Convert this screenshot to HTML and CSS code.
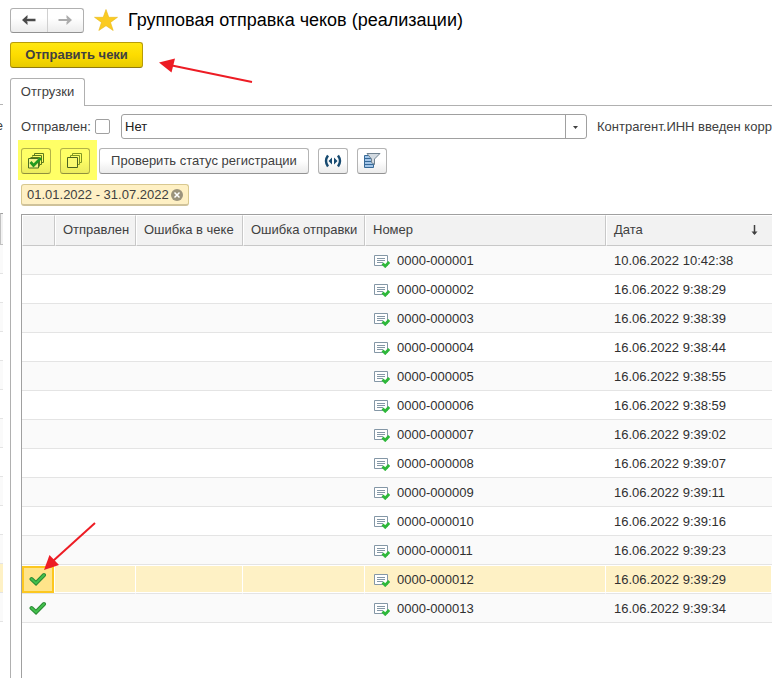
FILE: index.html
```html
<!DOCTYPE html>
<html lang="ru">
<head>
<meta charset="utf-8">
<title>Групповая отправка чеков (реализации)</title>
<link rel="stylesheet" href="styles.css">
</head>
<body>
<svg class="defs" width="0" height="0" aria-hidden="true">
  <symbol id="doc" viewBox="0 0 16 14">
    <path d="M.5 1.5h13v10H.5z" fill="#fff" stroke="#8497a6"/>
    <path d="M3 4.500h8M3 6.500h8M3 8.500h6" stroke="#8497a6" fill="none"/>
    <path d="M8.500 9.500l2.700 2.700 4-4.200" fill="none" stroke="#2eb83a" stroke-width="2.800"/>
  </symbol>
  <symbol id="tick" viewBox="0 0 18 14">
    <path d="M2.500 7l4.500 4.200L15 3" fill="none" stroke="#2b8a34" stroke-width="4" stroke-linecap="round"/>
    <path d="M2.500 7l4.500 4.200L15 3" fill="none" stroke="#42c04c" stroke-width="2" stroke-linecap="round"/>
  </symbol>
</svg>
<div class="app">
  <aside class="behind" aria-hidden="true">
    <div class="behind-top"></div>
    <div class="behind-text">е</div>
    <div class="behind-head"></div>
    <div class="behind-rows"><i></i><i></i><i></i><i></i><i></i><i></i><i></i><i></i><i></i><i></i><i></i><i class="sel"></i><i></i></div>
  </aside>
  <main class="form">
    <header class="title-row">
      <div class="nav">
        <button type="button" aria-label="Назад"><svg width="14" height="10" viewBox="0 0 14 10"><path d="M13.500 5H3" stroke="#4a4a4a" stroke-width="2.500"/><path d="M0 5l5.500-5v3L3.500 5l2 2v3z" fill="#4a4a4a"/></svg></button>
        <button type="button" aria-label="Вперед"><svg width="14" height="10" viewBox="0 0 14 10"><path d="M.5 5H11" stroke="#ababab" stroke-width="2"/><path d="M14 5L8.500 0v3l2 2-2 2v3z" fill="#ababab"/></svg></button>
      </div>
      <svg class="star" width="24" height="22" viewBox="0 0 24 22"><path d="M12 .5l2.800 7.800h8.700l-7 5.100 2.700 8.100L12 16.700l-7.200 4.800 2.700-8.100L.5 8.300h8.700z" fill="#fbcb20" stroke="#e8b81c" stroke-width=".6"/></svg>
      <h1>Групповая отправка чеков (реализации)</h1>
    </header>
    <button type="button" class="send">Отправить чеки</button>
    <svg class="arrow arrow-send" width="96" height="28" viewBox="0 0 96 28"><path d="M94 24L14 7.500" stroke="#ed1c24" stroke-width="2"/><path d="M1 4.500L17 .5l-3.500 14z" fill="#ed1c24"/></svg>
    <nav class="tabs"><button type="button" class="tab">Отгрузки</button></nav>
    <section class="page">
      <div class="filter">
        <label for="sent">Отправлен:</label>
        <input type="checkbox" id="sent">
        <div class="combo">
          <select aria-label="Отправлен"><option>Нет</option></select>
          <svg width="21" height="23" viewBox="0 0 21 23"><path d="M.5 0v23" stroke="#a0a0a0"/><path d="M8 11h5l-2.500 3z" fill="#404040"/></svg>
        </div>
        <span class="inn">Контрагент.ИНН введен корр</span>
      </div>
      <div class="tools">
        <div class="marked">
          <button type="button" class="icon-btn" aria-label="Установить флажки"><svg width="16" height="16" viewBox="0 0 16 16"><path d="M6.500 2.500v-2h9v9h-2M4.500 3.500v-1h9v9h-2M2.500 4.500h9v9" fill="none" stroke="#5c7a1c"/><path d="M.5 5.500h10v9.500H.5z" fill="#f4f48a" stroke="#4c7020"/><path d="M2.500 9l3 3.500L13 5" fill="none" stroke="#239a20" stroke-width="2.800"/></svg></button>
          <button type="button" class="icon-btn" aria-label="Снять флажки"><svg width="16" height="16" viewBox="0 0 16 16"><path d="M5.500 3V.5h9v9h-2M3.500 4.500v-2h9v9h-2" fill="none" stroke="#7f9622"/><path d="M.5 4.500h10v10H.5z" fill="#fafa70" stroke="#4c6420"/></svg></button>
        </div>
        <button type="button" class="check">Проверить статус регистрации</button>
        <button type="button" class="icon-btn" aria-label="Обновить"><svg width="18" height="14" viewBox="0 0 18 14"><path d="M4 1.500Q0 7 4 12.500M14 1.500q4 5.500 0 11" fill="none" stroke="#174a70" stroke-width="2.400"/><path d="M8 3.500v7L4.500 7zM10 3.500v7L13.500 7z" fill="#174a70"/></svg></button>
        <button type="button" class="icon-btn" aria-label="Отбор"><svg width="17" height="16" viewBox="0 0 17 16"><path d="M.5 2.500h9v12h-9z" fill="#a3c5e8" stroke="#376a98"/><path d="M.5 5.500h9M.5 8.500h9M.5 11.500h9" stroke="#376a98"/><path d="M3 .5h13L10.500 6v5.500l-3-2V6z" fill="#d3dbe2" stroke="#718391"/></svg></button>
      </div>
      <div class="period">01.01.2022 - 31.07.2022<button type="button" aria-label="Очистить"><svg width="12" height="12" viewBox="0 0 12 12"><circle cx="6" cy="6" r="6" fill="#9b937c"/><path d="M3.500 3.500l5 5m0-5l-5 5" stroke="#fff" stroke-width="1.500"/></svg></button></div>
      <div class="grid">
        <table>
          <colgroup><col class="c1"><col class="c2"><col class="c3"><col class="c4"><col class="c5"><col></colgroup>
          <thead><tr><th aria-label="Выбран"></th><th>Отправлен</th><th>Ошибка в чеке</th><th>Ошибка отправки</th><th>Номер</th><th><span class="sorted">Дата<svg width="7" height="12" viewBox="0 0 7 12"><path d="M3.500 1v9" stroke="#404040" stroke-width="1.500"/><path d="M.5 7.500h6l-3 3.500z" fill="#404040"/></svg></span></th></tr></thead>
          <tbody id="rows"></tbody>
        </table>
        <svg class="arrow arrow-row" width="54" height="50" viewBox="0 0 54 50"><path d="M53 1L11 39" stroke="#ed1c24" stroke-width="2"/><path d="M2 48L7.500 33 17 43z" fill="#ed1c24"/></svg>
      </div>
    </section>
  </main>
</div>
<script src="rows.js"></script>
</body>
</html>
```
FILE: rows.js
```js
const dates = [
  "10.06.2022 10:42:38", "16.06.2022 9:38:29", "16.06.2022 9:38:39", "16.06.2022 9:38:44",
  "16.06.2022 9:38:55", "16.06.2022 9:38:59", "16.06.2022 9:39:02", "16.06.2022 9:39:07",
  "16.06.2022 9:39:11", "16.06.2022 9:39:16", "16.06.2022 9:39:23", "16.06.2022 9:39:29",
  "16.06.2022 9:39:34"
];
const current = 11;
document.getElementById("rows").innerHTML = dates.map((date, i) => {
  const number = "0000-" + String(i + 1).padStart(6, "0");
  const tick = i >= 11 ? '<svg class="tick" width="18" height="14"><use href="#tick"/></svg>' : "";
  return `<tr${i === current ? ' class="current"' : ""}><td>${tick}</td><td></td><td></td><td></td>` +
    `<td><span class="number"><svg width="16" height="14"><use href="#doc"/></svg>${number}</span></td><td>${date}</td></tr>`;
}).join("");
```
FILE: styles.css
```css
* { box-sizing: border-box; }
body {
  margin: 0;
  background: #fff;
  color: #404040;
  font: 13px/16px "Liberation Sans", Arial, sans-serif;
  overflow: hidden;
}
button, select { font: inherit; color: inherit; }
svg { display: block; flex: none; }
.defs { position: absolute; }
.app { display: flex; min-height: 100vh; }

.behind { width: 3px; margin-right: 7px; overflow: hidden; flex: none; }
.behind-top { height: 105px; border-bottom: 1px solid #b4b4b4; }
.behind-text { height: 108px; padding-top: 13px; display: flex; justify-content: flex-end; }
.behind-head { height: 32px; border: 1px solid #c0c0c0; border-top-color: #a0a0a0; border-right: 0; background: #f2f2f2; }
.behind-rows i { display: block; height: 29px; border-bottom: 1px solid #e4e4e4; }
.behind-rows i:nth-child(odd) { background: #fafafa; }
.behind-rows i.sel { background: #fef1c5; }

.form { position: relative; flex: 1; min-width: 0; display: flex; flex-direction: column; }
.title-row { display: flex; align-items: center; height: 42px; padding-bottom: 2px; }
.nav {
  display: flex;
  height: 25px;
  width: 74px;
  border: 1px solid #b0b0b0;
  border-bottom-color: #929292;
  border-radius: 3px;
  background: linear-gradient(#fff 40%, #ececec);
}
.nav button { flex: 1; display: flex; align-items: center; justify-content: center; padding: 0; border: 0; background: none; }
.nav button + button { border-left: 1px solid #d0d0d0; }
.star { margin: 0 10px; }
h1 { margin: 0; font-size: 18px; line-height: 24px; font-weight: 400; color: #000; white-space: nowrap; }
.send {
  align-self: flex-start;
  width: 133px;
  height: 26px;
  padding: 0;
  border: 1px solid #b89c08;
  border-bottom-color: #8f7a10;
  border-radius: 3px;
  background: linear-gradient(#ffe712, #fddc00 50%, #e8cb00);
  font-weight: 700;
}
.arrow { position: absolute; pointer-events: none; }
.arrow-send { left: 148px; top: 58px; }
.arrow-row { left: 20px; top: 307px; }

.tabs { display: flex; margin-top: 10px; height: 28px; }
.tabs::after { content: ""; flex: 1; border-bottom: 1px solid #b0b0b0; }
.tab { width: 75px; padding: 0 0 2px; border: 1px solid #b0b0b0; border-bottom: 0; border-radius: 3px 3px 0 0; background: #fff; }
.page { flex: 1; border-left: 1px solid #b0b0b0; padding: 8px 0 0 10px; display: flex; flex-direction: column; }

.filter { display: flex; align-items: center; height: 25px; white-space: nowrap; }
.filter label { width: 68px; }
.filter input { appearance: none; width: 15px; height: 15px; margin: 0 11px 0 6px; border: 1px solid #a0a0a0; border-radius: 2px; background: #fff; flex: none; }
.combo { position: relative; flex: 0 0 466px; height: 25px; border: 1px solid #a0a0a0; border-radius: 3px; }
.combo select { appearance: none; width: 100%; height: 23px; padding: 0 24px 0 3px; border: 0; background: none; color: #202020; }
.combo svg { position: absolute; right: 0; top: 0; pointer-events: none; }
.inn { margin-left: 10px; }

.tools { display: flex; align-items: flex-start; height: 41px; }
.marked { display: flex; gap: 9px; padding: 8px 7px 6px 3px; margin: 1px 0 0 -3px; background: #ffff66; }
.icon-btn, .check {
  height: 26px;
  padding: 0;
  border: 1px solid #b4b4b4;
  border-bottom-color: #929292;
  border-radius: 3px;
  background: linear-gradient(#fff 50%, #ebebeb);
}
.icon-btn { width: 30px; display: flex; align-items: center; justify-content: center; }
.marked .icon-btn { border-color: #b2b247 #b2b247 #90903c; background: linear-gradient(#ffff66 40%, #ebeb5e); }
.check { width: 210px; margin-left: 2px; }
.tools > .icon-btn { margin-left: 9px; }
.tools > button { margin-top: 9px; }

.period {
  align-self: flex-start;
  display: flex;
  align-items: center;
  gap: 2px;
  height: 22px;
  margin: 4px 0 8px;
  padding: 0 5px;
  border: 1px solid #d8c890;
  border-bottom: 2px solid #cfc29a;
  border-radius: 3px;
  background: #fef0c4;
}
.period button { padding: 0; border: 0; background: none; }

.grid { position: relative; flex: 1; border: 1px solid #a0a0a0; border-width: 1px 0 0 1px; }
table { width: 100%; table-layout: fixed; border-collapse: separate; border-spacing: 0; white-space: nowrap; }
.c1 { width: 33px; }
.c2 { width: 81px; }
.c3 { width: 107px; }
.c4 { width: 122px; }
.c5 { width: 241px; }
th, td { text-align: left; font-weight: 400; }
th {
  height: 31px;
  border: 1px solid #fff;
  border-right-color: #c8c8c8;
  border-bottom-color: #c8c8c8;
  padding: 0 0 2px 7px;
  background: #f2f2f2;
}
th:last-child { border-right: 0; }
td { height: 29px; padding: 2px 0 0 8px; border-bottom: 1px solid #e4e4e4; color: #303030; }
td:first-child { padding: 0 0 0 7px; }
tbody tr:nth-child(odd) { background: #fafafa; }
.sorted { display: flex; align-items: center; justify-content: space-between; padding-right: 14px; }
.number { display: flex; align-items: center; gap: 7px; padding-left: 1px; }
.current td { background: #fef1c5; border-right: 1px solid #fff; box-shadow: inset 0 1px #fff, inset 0 -1px #fff; }
.current td:first-child { background: #ffe48a; border-right: 0; box-shadow: inset 0 1px #fff, inset -1px 0 #fff, inset 0 3px #fcc720, inset 2px 0 #fcc720, inset -3px 0 #fcc720, inset 0 -2px #fcc720; }
```
